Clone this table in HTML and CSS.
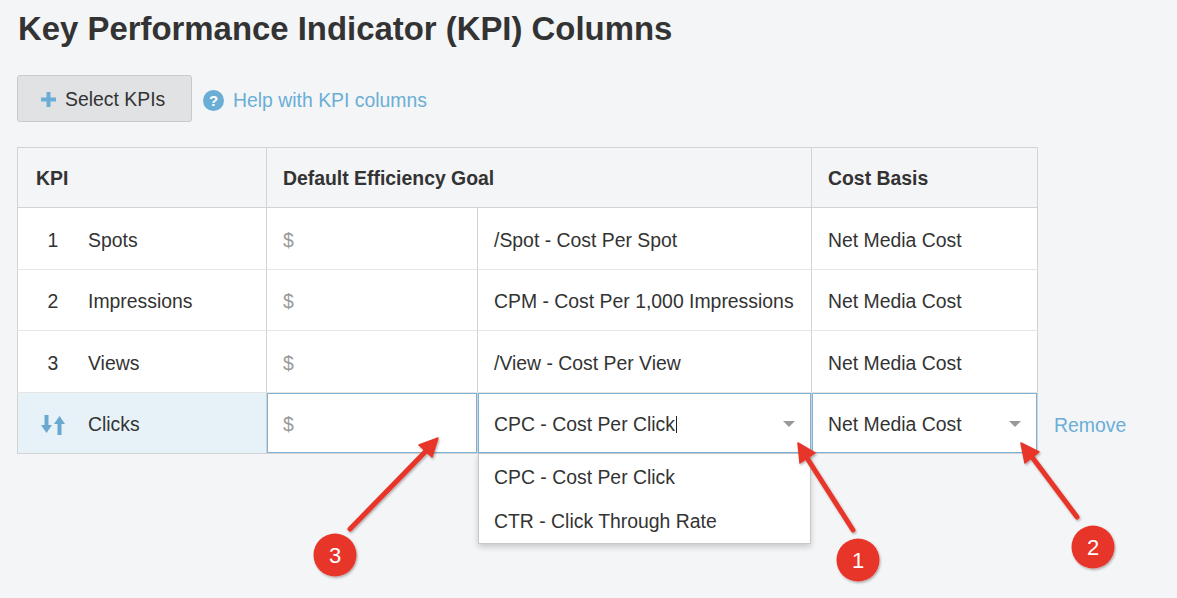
FILE: index.html
```html
<!DOCTYPE html>
<html lang="en">
<head>
<meta charset="utf-8">
<title>KPI Columns</title>
<link rel="stylesheet" href="styles.css">
</head>
<body>
<div class="page">
  <h1 class="title">Key Performance Indicator (KPI) Columns</h1>
  <div class="toolbar">
    <button class="btn" type="button">
      <svg class="plus" width="15" height="15" viewBox="0 0 15 15"><rect x="5.5" y="0" width="4" height="15" fill="#6aaed6"/><rect x="0" y="5.5" width="15" height="4" fill="#6aaed6"/></svg>
      <span>Select KPIs</span>
    </button>
    <a class="help" href="#">
      <svg class="help-icon" width="21" height="21" viewBox="0 0 21 21"><circle cx="10.5" cy="10.5" r="10.5" fill="#6aaed6"/><text x="10.5" y="16" text-anchor="middle" font-family="Liberation Sans, Arial, sans-serif" font-weight="700" font-size="15" fill="#fff">?</text></svg>
      <span>Help with KPI columns</span>
    </a>
  </div>

  <div class="kpi-table">
    <div class="cell head first">KPI</div>
    <div class="cell head span2">Default Efficiency Goal</div>
    <div class="cell head">Cost Basis</div>
    <div class="cell extra"></div>

    <div class="cell first"><span class="num">1</span><span class="name">Spots</span></div>
    <div class="cell muted">$</div>
    <div class="cell">/Spot - Cost Per Spot</div>
    <div class="cell">Net Media Cost</div>
    <div class="cell extra"></div>

    <div class="cell first"><span class="num">2</span><span class="name">Impressions</span></div>
    <div class="cell muted">$</div>
    <div class="cell">CPM - Cost Per 1,000 Impressions</div>
    <div class="cell">Net Media Cost</div>
    <div class="cell extra"></div>

    <div class="cell first"><span class="num">3</span><span class="name">Views</span></div>
    <div class="cell muted">$</div>
    <div class="cell">/View - Cost Per View</div>
    <div class="cell">Net Media Cost</div>
    <div class="cell extra"></div>

    <div class="cell first active last">
      <span class="num"><svg width="24" height="20" viewBox="0 0 24 20"><rect x="3.5" y="0" width="4" height="12" fill="#6aa8cf"/><polygon points="0,10 11,10 5.5,18" fill="#6aa8cf"/><rect x="16.5" y="7" width="4" height="13" fill="#6aa8cf"/><polygon points="13,9 24,9 18.5,1" fill="#6aa8cf"/></svg></span><span class="name">Clicks</span>
    </div>
    <div class="cell edit last"><div class="field muted">$</div></div>
    <div class="cell edit last select-wrap">
      <div class="field select">CPC - Cost Per Click<span class="cursor"></span><span class="caret"></span></div>
      <ul class="menu">
        <li>CPC - Cost Per Click</li>
        <li>CTR - Click Through Rate</li>
      </ul>
    </div>
    <div class="cell edit last"><div class="field select">Net Media Cost<span class="caret"></span></div></div>
    <div class="cell extra"><a class="remove" href="#">Remove</a></div>
  </div>
</div>

<svg class="annotations" width="1177" height="598" viewBox="0 0 1177 598">
  <defs>
    <filter id="sh" x="-20%" y="-20%" width="140%" height="140%">
      <feDropShadow dx="1" dy="1.5" stdDeviation="1.2" flood-color="#000" flood-opacity="0.3"/>
    </filter>
  </defs>
  <g filter="url(#sh)" fill="#e8352a" stroke="#e8352a">
    <line x1="350" y1="529" x2="426" y2="451" stroke-width="5" stroke-linecap="round"/>
    <polygon points="438,438 432,457 419,445" stroke-width="1.5" stroke-linejoin="round"/>
    <line x1="853" y1="530" x2="807" y2="458" stroke-width="5" stroke-linecap="round"/>
    <polygon points="798,443 815,453 800,463" stroke-width="1.5" stroke-linejoin="round"/>
    <line x1="1077" y1="517" x2="1032" y2="457" stroke-width="5" stroke-linecap="round"/>
    <polygon points="1021,443 1039,452 1025,463" stroke-width="1.5" stroke-linejoin="round"/>
    <circle cx="335" cy="555" r="21.5" stroke="none"/>
    <circle cx="858" cy="560" r="21.5" stroke="none"/>
    <circle cx="1093" cy="547" r="21.5" stroke="none"/>
  </g>
  <g font-family="Liberation Sans, Arial, sans-serif" font-size="22" fill="#fff" text-anchor="middle">
    <text x="335" y="563">3</text>
    <text x="858" y="568">1</text>
    <text x="1093" y="555">2</text>
  </g>
</svg>
</body>
</html>
```
FILE: styles.css
```css
* { box-sizing: border-box; }
html, body { margin: 0; padding: 0; }
body {
  background: #f4f5f7;
  font-family: "Liberation Sans", Arial, sans-serif;
  font-size: 19.4px;
  color: #333;
  width: 1177px;
  height: 598px;
  overflow: hidden;
  position: relative;
}
.page { padding: 9px 17px 0 17px; }
.title {
  margin: 0;
  font-size: 32.9px;
  line-height: 40px;
  font-weight: 700;
  color: #333;
  padding-left: 1px;
}
.toolbar {
  margin-top: 26px;
  display: flex;
  align-items: center;
  gap: 11px;
}
.btn {
  display: flex;
  align-items: center;
  gap: 9px;
  height: 47px;
  width: 175px;
  padding: 2px 0 0 23px;
  background: #e1e2e4;
  border: 1px solid #c9cacc;
  border-radius: 3px;
  font-family: inherit;
  font-size: 19.4px;
  color: #333;
}
.help {
  display: flex;
  align-items: center;
  gap: 9px;
  padding-top: 3px;
  color: #6aaed6;
  text-decoration: none;
}
.kpi-table {
  margin-top: 25px;
  display: grid;
  grid-template-columns: 250px 211px 334px 226px auto;
  grid-template-rows: 61px 62px 61px 62px 61px;
  position: relative;
}
.cell {
  border-right: 1px solid #d3d3d3;
  border-bottom: 1px solid #e6e6e6;
  background: #fff;
  display: flex;
  align-items: center;
  padding-left: 16px;
  padding-top: 3px;
  white-space: nowrap;
}
.cell.first { border-left: 1px solid #d3d3d3; padding-left: 18px; }
.cell.head {
  background: #f4f5f7;
  font-weight: 700;
  padding-top: 2px;
  border-top: 1px solid #d3d3d3;
  border-bottom: 1px solid #d3d3d3;
}
.cell.span2 { grid-column: span 2; }
.cell.extra { border: none; background: transparent; }
.cell.last { border-bottom: 1px solid #d3d3d3; }
.muted { color: #9a9a9a; }
.num {
  width: 34px;
  display: inline-flex;
  justify-content: center;
  align-items: center;
}
.name { margin-left: 18px; }
.cell.active { background: #e7f1f8; }
.cell.edit { padding: 0; }
.field {
  width: 100%;
  height: 100%;
  border: 1px solid #7eb2d5;
  background: #fff;
  display: flex;
  align-items: center;
  padding-left: 15px;
  padding-top: 3px;
  position: relative;
}
.select { color: #333; }
.caret {
  position: absolute;
  right: 15px;
  top: 27px;
  width: 0;
  height: 0;
  border-left: 6px solid transparent;
  border-right: 6px solid transparent;
  border-top: 6px solid #999;
}
.cursor {
  display: inline-block;
  width: 1px;
  height: 17px;
  background: #222;
  margin-left: 1px;
}
.select-wrap { position: relative; }
.menu {
  position: absolute;
  left: 0;
  top: 60px;
  width: 333px;
  height: 91px;
  margin: 0;
  padding: 0;
  list-style: none;
  background: #fff;
  border: 1px solid #c8c8c8;
  box-shadow: 0 3px 6px rgba(0, 0, 0, 0.18);
  z-index: 2;
}
.menu li {
  height: 44px;
  display: flex;
  align-items: center;
  padding-left: 15px;
  padding-top: 2px;
}
.remove {
  color: #6aaed6;
  text-decoration: none;
}
.annotations {
  position: absolute;
  left: 0;
  top: 0;
  pointer-events: none;
  z-index: 5;
}
```
